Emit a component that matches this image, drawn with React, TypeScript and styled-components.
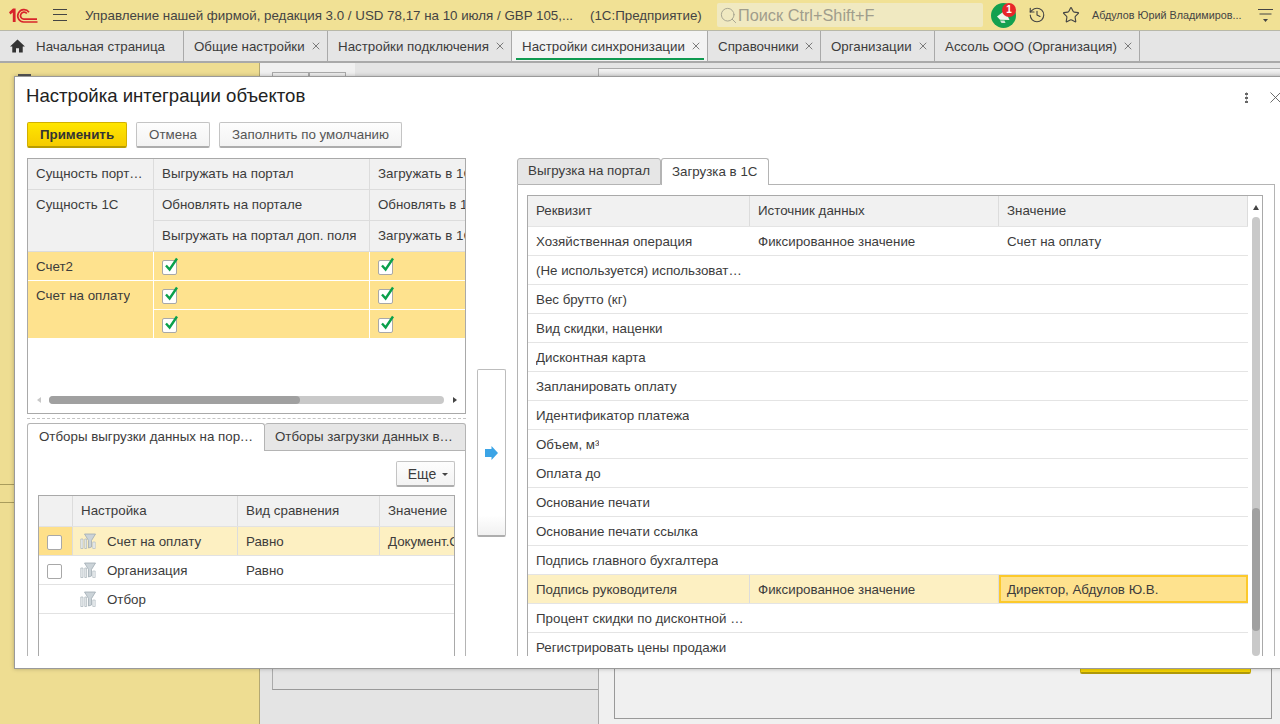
import React from 'react';
import styled, { createGlobalStyle } from 'styled-components';
import { History, Search, Star, X } from 'lucide-react';

const GlobalStyle = createGlobalStyle`
  html, body {
    margin: 0;
    padding: 0;
    overflow: hidden;
    background: #e4e4e4;
    font-family: "Liberation Sans", Arial, sans-serif;
    font-size: 13.33px;
    color: #3c3c3c;
  }
  * {
    box-sizing: border-box;
  }
`;

const Page = styled.div`
  position: relative;
  width: 1280px;
  height: 724px;
  overflow: hidden;
  display: flex;
  flex-direction: column;
`;

/* ---------- top bar ---------- */

const TopBar = styled.header`
  height: 31px;
  flex: none;
  display: flex;
  align-items: center;
  background: #f1e195;
  border-bottom: 1px solid #b8b8a8;
  padding-left: 8px;
`;

const Burger = styled.div`
  width: 14px;
  height: 12px;
  margin-left: 15px;
  border-top: 1px solid #444;
  border-bottom: 1px solid #444;
  position: relative;

  &::after {
    content: '';
    position: absolute;
    left: 0;
    right: 0;
    top: 4px;
    height: 1px;
    background: #444;
  }
`;

const AppTitle = styled.div`
  margin-left: 18px;
  width: 505px;
  white-space: nowrap;
  color: #444;
`;

const AppKind = styled.div`
  width: 127px;
  white-space: nowrap;
  color: #444;
`;

const SearchBox = styled.div`
  width: 266px;
  height: 24px;
  display: flex;
  align-items: center;
  padding-left: 2px;
  background: #f0e9c1;
  border-radius: 2px;
  font-size: 16.3px;
  color: #a09d8c;
`;

const NotifyWrap = styled.div`
  position: relative;
  width: 25px;
  height: 25px;
  margin-left: 8px;
`;

const NotifyBadge = styled.div`
  position: absolute;
  top: 0;
  right: 0;
  width: 14px;
  height: 14px;
  border-radius: 50%;
  background: #e8262a;
  color: #fff;
  font-size: 10px;
  font-weight: 700;
  line-height: 14px;
  text-align: center;
`;

const BarIcon = styled.div<{ $left: number }>`
  display: flex;
  margin-left: ${(p) => p.$left}px;
  color: #444;
`;

const UserName = styled.div`
  margin-left: 12px;
  width: 166px;
  font-size: 10.8px;
  white-space: nowrap;
  color: #444;
`;

/* ---------- open tabs ---------- */

const TabsBar = styled.nav`
  height: 32px;
  flex: none;
  display: flex;
  background: #e5e5e5;
  border-bottom: 2px solid #a9a9a9;
`;

const PageTab = styled.div<{ $width: number; $active?: boolean }>`
  position: relative;
  width: ${(p) => p.$width}px;
  display: flex;
  align-items: center;
  padding-left: 10px;
  white-space: nowrap;
  border-right: 1px solid #a9a9a9;
  background: ${(p) => (p.$active ? '#f3f3f3' : 'transparent')};
  color: #3c3c3c;

  &::after {
    content: '';
    display: ${(p) => (p.$active ? 'block' : 'none')};
    position: absolute;
    left: 4px;
    right: 3px;
    bottom: 1px;
    height: 2px;
    background: #0f9a50;
  }
`;

const HomeTab = styled(PageTab)`
  gap: 11px;
`;

const TabClose = styled.span`
  display: flex;
  margin-left: auto;
  margin-right: 5px;
  color: #555;
`;

/* ---------- page behind the dialog ---------- */

const Workspace = styled.div`
  flex: 1;
  display: flex;
  min-height: 0;
`;

const Sidebar = styled.aside`
  width: 260px;
  flex: none;
  background: #eedd92;
  border-right: 1px solid #b3a873;
  padding-top: 11px;
`;

const SidebarMark = styled.div`
  width: 13px;
  height: 6px;
  margin-left: 18px;
  background: #555;
`;

const SidebarItem = styled.div<{ $top: number }>`
  height: 1px;
  margin-top: ${(p) => p.$top}px;
  background: #a99c5c;
`;

const MainArea = styled.main`
  flex: 1;
  display: flex;
  background: #e4e4e4;
`;

const FormColumn = styled.div`
  width: 338px;
  flex: none;
  display: flex;
  flex-direction: column;
  align-items: flex-start;
`;

const FormToolbar = styled.div`
  width: 95px;
  height: 14px;
  background: #f0f0f0;
  padding: 9px 0 0 12px;
  flex: none;
  display: flex;
`;

const FormToolbarBtn = styled.div`
  width: 37px;
  height: 5px;
  background: #eee;
  border: 1px solid #aaa;
  border-bottom: none;
`;

const FormBox = styled.div`
  width: 326px;
  margin-left: 12px;
  height: 613px;
  border: 1px solid #999;
  border-left: 1px solid #aaa;
  border-right: none;
`;

const WindowBack = styled.div`
  flex: 1;
  margin-top: 5px;
  background: #f0f0f0;
  border-left: 1px solid #aaa;
  border-top: 1px solid #aaa;
  display: flex;
  flex-direction: column;
`;

const WindowHead = styled.div`
  height: 9px;
  flex: none;
  background: linear-gradient(#f4f4f4, #dcdcdc);
`;

const WindowBody = styled.div`
  flex: 1;
  padding: 0 8px 5px 15px;
  display: flex;
`;

const WindowInner = styled.div`
  flex: 1;
  border: 1px solid #999;
  display: flex;
  flex-direction: column;
  justify-content: flex-end;
  align-items: flex-end;
  padding: 0 20px 44px 0;
`;

const WindowButton = styled.div`
  width: 171px;
  height: 26px;
  background: #f6d400;
  border: 1px solid #c9ad00;
  border-bottom: 2px solid #b19a0a;
  border-radius: 2px;
`;

/* ---------- dialog ---------- */

const Dialog = styled.section`
  position: absolute;
  left: 14px;
  top: 76px;
  width: 1290px;
  height: 593px;
  background: #fff;
  border: 1px solid #9a9a9a;
  box-shadow: 0 0 4px rgba(0, 0, 0, 0.25);
  display: flex;
  flex-direction: column;
  padding: 0 24px 12px 12px;
`;

const DialogHead = styled.div`
  height: 45px;
  flex: none;
  display: flex;
  align-items: center;
  padding-bottom: 8px;
  position: relative;
`;

const DialogTitle = styled.h1`
  margin: 0 0 0 -1px;
  font-size: 18.6px;
  font-weight: 400;
  color: #222;
`;

const HeadDots = styled.div`
  position: absolute;
  left: 1218px;
  top: 15px;
  width: 3px;
  height: 11px;
  background: radial-gradient(circle at center, #666 1.4px, transparent 1.6px) 0 0 / 3px 4px repeat-y;
`;

const HeadClose = styled.div`
  position: absolute;
  left: 1239px;
  top: 11px;
  display: flex;
  color: #555;
`;

const CommandBar = styled.div`
  height: 26px;
  flex: none;
  display: flex;
  gap: 9px;
  margin-bottom: 10px;
`;

const Button = styled.button<{ $primary?: boolean; $width: number }>`
  width: ${(p) => p.$width}px;
  height: 26px;
  padding: 0;
  font: ${(p) => (p.$primary ? '700' : '400')} 13.33px "Liberation Sans", Arial, sans-serif;
  color: ${(p) => (p.$primary ? '#333' : '#555')};
  background: ${(p) => (p.$primary ? 'linear-gradient(#ffe600, #f5cb00)' : 'linear-gradient(#fdfdfd, #f3f3f3)')};
  border: 1px solid ${(p) => (p.$primary ? '#d2b000' : '#c4c4c4')};
  border-bottom: 2px solid ${(p) => (p.$primary ? '#b89c00' : '#adadad')};
  border-radius: 2px;
`;

const Columns = styled.div`
  flex: 1;
  min-height: 0;
  display: flex;
`;

const LeftColumn = styled.div`
  width: 439px;
  flex: none;
  display: flex;
  flex-direction: column;
`;

const MoveColumn = styled.div`
  width: 51px;
  flex: none;
  display: flex;
  justify-content: center;
  padding-top: 211px;
`;

const MoveButton = styled.div`
  width: 29px;
  height: 168px;
  display: flex;
  align-items: center;
  justify-content: center;
  background: linear-gradient(#fff 88%, #f1f1f1);
  border: 1px solid #bdbdbd;
  border-bottom: 2px solid #aeaeae;
  border-radius: 2px;
`;

const RightColumn = styled.div`
  width: 758px;
  flex: none;
  display: flex;
  flex-direction: column;
`;

/* ---------- entity table ---------- */

const EntityBox = styled.div`
  height: 256px;
  flex: none;
  border: 1px solid #a9a9a9;
  display: flex;
  flex-direction: column;
`;

const EntityGrid = styled.div`
  flex: 1;
  display: grid;
  grid-template-columns: 126px 216px 95px;
  grid-template-rows: repeat(3, 31px) repeat(3, 29px);
  align-content: start;
`;

const EntityCell = styled.div<{ $head?: boolean; $span?: number; $top?: boolean; $clip?: boolean }>`
  grid-row: span ${(p) => p.$span || 1};
  display: flex;
  align-items: ${(p) => (p.$top ? 'flex-start' : 'center')};
  padding: ${(p) => (p.$top ? '7px' : '0')} ${(p) => (p.$clip ? '0' : '8px')} ${(p) => (p.$head && !p.$top ? '2px' : '0')} 8px;
  min-width: 0;
  overflow: hidden;
  white-space: nowrap;
  background: ${(p) => (p.$head ? '#f1f1f1' : '#fee28e')};
  border-right: ${(p) => (p.$clip ? 'none' : `1px solid ${p.$head ? '#dcdcdc' : '#fff'}`)};
  border-bottom: 1px solid ${(p) => (p.$head ? '#dcdcdc' : '#fff')};
`;

const CellText = styled.span`
  overflow: hidden;
  text-overflow: ellipsis;
`;

const ClippedText = styled.span`
  overflow: hidden;
  text-overflow: clip;
`;

const CheckBox = styled.span`
  position: relative;
  display: block;
  width: 15px;
  height: 15px;
  flex: none;
  margin-top: 3px;
  background: #fff;
  border: 1px solid #a8a8a8;
  border-radius: 2px;

  svg {
    position: absolute;
    left: -1px;
    top: -5px;
  }
`;

const HScroll = styled.div`
  height: 26px;
  flex: none;
  display: flex;
  align-items: center;
  padding: 0 8px 1px 9px;
  margin-top: -1px;
`;

const ArrowGlyph = styled.span<{ $dir: 'left' | 'right' | 'up'; $dim?: boolean }>`
  display: block;
  flex: none;
  width: 0;
  height: 0;
  border-style: solid;
  border-color: transparent;
  ${(p) =>
    p.$dir === 'up'
      ? `border-width: 0 3.5px 5px; border-bottom-color: #444;`
      : p.$dir === 'left'
        ? `border-width: 3px 4px 3px 0; border-right-color: ${p.$dim ? '#c8c8c8' : '#444'};`
        : `border-width: 3px 0 3px 4px; border-left-color: #444;`}
`;

const HTrack = styled.div`
  flex: 1;
  height: 8px;
  margin: 0 9px 0 8px;
  border-radius: 4px;
  background: #c9c9c9;
`;

const HThumb = styled.div`
  height: 8px;
  border-radius: 4px;
  background: #a0a0a0;
`;

const Splitter = styled.div`
  height: 9px;
  flex: none;
  padding-top: 4px;

  &::before {
    content: '';
    display: block;
    border-top: 1px dashed #c4c4c4;
  }
`;

/* ---------- tabs inside the dialog ---------- */

const TabRow = styled.div<{ $height: number }>`
  height: ${(p) => p.$height}px;
  flex: none;
  display: flex;
`;

const FormTab = styled.div<{ $width: number | string; $active?: boolean; $fill?: boolean }>`
  width: ${(p) => (typeof p.$width === 'number' ? `${p.$width}px` : p.$width)};
  flex: ${(p) => (p.$fill ? '1 1 0' : 'none')};
  min-width: 0;
  display: flex;
  align-items: center;
  padding: 0 10px 2px;
  white-space: nowrap;
  background: ${(p) => (p.$active ? '#fff' : '#e6e6e6')};
  border: 1px solid #b4b4b4;
  border-bottom: ${(p) => (p.$active ? 'none' : '1px solid #b4b4b4')};
  border-left-width: ${(p) => (p.$active ? '1px' : '0')};
  border-radius: 3px 3px 0 0;
  color: #3c3c3c;
`;

const FirstTab = styled(FormTab)`
  border-left-width: 1px;
`;

const FilterFirstTab = styled(FirstTab)`
  padding-left: 11px;
`;

const TabRest = styled.div`
  flex: 1;
  border-bottom: 1px solid #b4b4b4;
`;

const TabPanel = styled.div`
  flex: 1;
  min-height: 0;
  border-left: 1px solid #b4b4b4;
  border-right: 1px solid #b4b4b4;
  display: flex;
  flex-direction: column;
`;

const FilterPanel = styled(TabPanel)`
  padding: 10px 10px 0;
`;

const FilterActions = styled.div`
  height: 26px;
  flex: none;
  display: flex;
  justify-content: flex-end;
  margin-bottom: 8px;
`;

const MoreButton = styled.button`
  width: 59px;
  height: 26px;
  padding: 0 0 0 5px;
  display: flex;
  align-items: center;
  justify-content: center;
  gap: 6px;
  font: 14px "Liberation Sans", Arial, sans-serif;
  color: #3c3c3c;
  background: linear-gradient(#fdfdfd, #f3f3f3);
  border: 1px solid #c4c4c4;
  border-bottom: 2px solid #adadad;
  border-radius: 2px;

  &::after {
    content: '';
    margin-top: 2px;
    border-style: solid;
    border-width: 3px 3px 0;
    border-color: #444 transparent transparent;
  }
`;

/* ---------- filter table ---------- */

const FilterTable = styled.div`
  flex: 1;
  min-height: 0;
  overflow: hidden;
  border: 1px solid #a9a9a9;
  border-bottom: none;
`;

const FilterRow = styled.div<{ $head?: boolean }>`
  display: grid;
  grid-template-columns: 34px 165px 142px 1fr;
  height: ${(p) => (p.$head ? 31 : 29)}px;
  background: ${(p) => (p.$head ? '#f1f1f1' : '#fff')};
  border-bottom: 1px solid #e2e2e2;
`;

const FilterCell = styled.div<{ $tint?: 'strong' | 'soft'; $line?: boolean; $head?: boolean }>`
  display: flex;
  align-items: center;
  gap: 11px;
  min-width: 0;
  overflow: hidden;
  white-space: nowrap;
  padding: 0 0 ${(p) => (p.$head ? '2px' : '0')} 8px;
  background: ${(p) => (p.$tint === 'strong' ? '#fee08a' : p.$tint === 'soft' ? '#fdf0c2' : 'transparent')};
  border-right: ${(p) => (p.$line ? '1px solid #dcdcdc' : 'none')};
`;

const FilterIconWrap = styled.span`
  display: flex;
  flex: none;
  margin-left: -1px;
`;

/* ---------- requisites table ---------- */

const RightPanel = styled(TabPanel)`
  padding: 10px 11px 0 9px;
`;

const AttrTable = styled.div`
  flex: 1;
  min-height: 0;
  display: flex;
  overflow: hidden;
  border: 1px solid #a9a9a9;
  border-bottom: none;
`;

const AttrRows = styled.div`
  width: 720px;
  flex: none;
`;

const AttrRow = styled.div<{ $head?: boolean; $hot?: boolean }>`
  display: grid;
  grid-template-columns: 222px 249px 1fr;
  height: ${(p) => (p.$head ? 31 : 29)}px;
  background: ${(p) => (p.$head ? '#f1f1f1' : p.$hot ? '#fdf0c2' : '#fff')};
  border-bottom: 1px solid #e4e4e4;
`;

const AttrCell = styled.div<{ $line?: boolean; $focus?: boolean; $head?: boolean }>`
  display: flex;
  align-items: center;
  min-width: 0;
  white-space: nowrap;
  padding: 0 5px ${(p) => (p.$head ? '2px' : '0')} 8px;
  border-right: ${(p) => (p.$line ? '1px solid #dcdcdc' : 'none')};
  background: ${(p) => (p.$focus ? '#fee28e' : 'transparent')};
  outline: ${(p) => (p.$focus ? '2px solid #fcc92b' : 'none')};
  outline-offset: -2px;
`;

const AttrText = styled.span`
  overflow: hidden;
  text-overflow: ellipsis;
`;

const VScroll = styled.div`
  flex: 1;
  display: flex;
  flex-direction: column;
  align-items: center;
  padding: 9px 0 0 1px;
`;

const VTrack = styled.div`
  width: 8px;
  flex: 1;
  margin-top: 7px;
  border-radius: 4px;
  background: #c9c9c9;
`;

const VThumb = styled.div`
  width: 8px;
  height: 123px;
  margin-top: 291px;
  border-radius: 4px;
  background: #a0a0a0;
`;

/* ---------- drawings ---------- */

const Logo = () => (
  <svg width="30" height="17" viewBox="0 0 30 17" fill="none">
    <path d="M1 5.2 5 1.5h2.6V15H4.8V5.4L2.4 7.4Z" fill="#d8242a" />
    <path d="M21 5.2A6.2 6.2 0 1 0 15.6 15H29.5" stroke="#d8242a" strokeWidth="1.7" />
    <path d="M18.8 6.6A3.5 3.5 0 1 0 15.8 12.2H29" stroke="#d8242a" strokeWidth="1.7" />
  </svg>
);

const Bell = () => (
  <svg width="25" height="25" viewBox="0 0 25 25">
    <circle cx="12.5" cy="12.5" r="12.5" fill="#13a04f" />
    <path d="M6 13.5 14 7.5 18.5 17 9 16.8Z" fill="#eef5ea" />
    <path d="M9 17.5 13.5 17.5 14.5 20 10.5 20Z" fill="#cfe6d3" />
  </svg>
);

const MenuLines = () => (
  <svg width="15" height="15" viewBox="0 0 15 15" fill="none" stroke="#444">
    <path d="M0 1.5H15M1.5 6H13.5" />
    <path d="M5 11 7.5 14 10 11Z" fill="#444" stroke="none" />
  </svg>
);

const HomeIcon = () => (
  <svg width="15" height="14" viewBox="0 0 16 15" fill="#333">
    <path d="M8 .5 16 8h-2.4v6.5H9.6V10H6.4v4.5H2.4V8H0Z" />
  </svg>
);

const Tick = () => (
  <svg width="18" height="18" viewBox="0 0 18 18" fill="none">
    <path d="M4 9.5 7.6 13.5 15 2.5" stroke="#0aa04c" strokeWidth="2.4" />
  </svg>
);

const MoveArrow = () => (
  <svg width="13" height="14" viewBox="0 0 13 14">
    <path d="M0 3H6.5V0L13 7 6.5 14V11H0Z" fill="#3ba4e6" />
  </svg>
);

const FilterIcon = () => (
  <svg width="16" height="16" viewBox="0 0 16 16" fill="none">
    <path d="M4.5 1H15.5L11.5 7.5V14L8.5 15V7.5Z" fill="#cbd3d8" stroke="#9fabb2" strokeWidth=".8" />
    <path d="M.8 6H3V15.5H.8ZM4.8 6H6.6V15.5H4.8Z" fill="#edf0f2" stroke="#a7b2b9" strokeWidth=".7" />
    <path d="M12.8 9H15.2V15.5H12.8Z" fill="#edf0f2" stroke="#b3bdc3" strokeWidth=".7" />
  </svg>
);

/* ---------- data ---------- */

const pageTabs = [
  { label: 'Общие настройки', width: 144 },
  { label: 'Настройки подключения', width: 184 },
  { label: 'Настройки синхронизации', width: 196, active: true },
  { label: 'Справочники', width: 113 },
  { label: 'Организации', width: 114 },
  { label: 'Ассоль ООО (Организация)', width: 205 },
];

const attrRows: { name: string; source?: string; value?: string; hot?: boolean }[] = [
  { name: 'Хозяйственная операция', source: 'Фиксированное значение', value: 'Счет на оплату' },
  { name: '(Не используется) использовать упаковки' },
  { name: 'Вес брутто (кг)' },
  { name: 'Вид скидки, наценки' },
  { name: 'Дисконтная карта' },
  { name: 'Запланировать оплату' },
  { name: 'Идентификатор платежа' },
  { name: 'Объем, м³' },
  { name: 'Оплата до' },
  { name: 'Основание печати' },
  { name: 'Основание печати ссылка' },
  { name: 'Подпись главного бухгалтера' },
  { name: 'Подпись руководителя', source: 'Фиксированное значение', value: 'Директор, Абдулов Ю.В.', hot: true },
  { name: 'Процент скидки по дисконтной карте' },
  { name: 'Регистрировать цены продажи' },
];

const filterRows = [
  { name: 'Счет на оплату', kind: 'Равно', value: 'Документ.Счет', check: true, hot: true },
  { name: 'Организация', kind: 'Равно', value: '', check: true },
  { name: 'Отбор', kind: '', value: '', check: false },
];

const App: React.FC = () => (
  <Page>
    <GlobalStyle />

    <TopBar>
      <Logo />
      <Burger />
      <AppTitle>Управление нашей фирмой, редакция 3.0 / USD 78,17 на 10 июля / GBP 105,...</AppTitle>
      <AppKind>(1С:Предприятие)</AppKind>
      <SearchBox>
        <Search size={19} strokeWidth={1.2} color="#a5a38f" />
        Поиск Ctrl+Shift+F
      </SearchBox>
      <NotifyWrap>
        <Bell />
        <NotifyBadge>1</NotifyBadge>
      </NotifyWrap>
      <BarIcon $left={12}>
        <History size={18} strokeWidth={1.5} />
      </BarIcon>
      <BarIcon $left={16}>
        <Star size={18} strokeWidth={1.5} />
      </BarIcon>
      <UserName>Абдулов Юрий Владимиров...</UserName>
      <MenuLines />
    </TopBar>

    <TabsBar>
      <HomeTab $width={184}>
        <HomeIcon />
        Начальная страница
      </HomeTab>
      {pageTabs.map((tab) => (
        <PageTab key={tab.label} $width={tab.width} $active={tab.active}>
          {tab.label}
          <TabClose>
            <X size={12} strokeWidth={1.5} />
          </TabClose>
        </PageTab>
      ))}
    </TabsBar>

    <Workspace>
      <Sidebar>
        <SidebarMark />
        <SidebarItem $top={404} />
        <SidebarItem $top={17} />
      </Sidebar>
      <MainArea>
        <FormColumn>
          <FormToolbar>
            <FormToolbarBtn />
            <FormToolbarBtn />
          </FormToolbar>
          <FormBox />
        </FormColumn>
        <WindowBack>
          <WindowHead />
          <WindowBody>
            <WindowInner>
              <WindowButton />
            </WindowInner>
          </WindowBody>
        </WindowBack>
      </MainArea>
    </Workspace>

    <Dialog>
      <DialogHead>
        <DialogTitle>Настройка интеграции объектов</DialogTitle>
        <HeadDots />
        <HeadClose>
          <X size={19} strokeWidth={1.1} />
        </HeadClose>
      </DialogHead>

      <CommandBar>
        <Button $primary $width={100}>Применить</Button>
        <Button $width={74}>Отмена</Button>
        <Button $width={183}>Заполнить по умолчанию</Button>
      </CommandBar>

      <Columns>
        <LeftColumn>
          <EntityBox>
            <EntityGrid>
              <EntityCell $head><CellText>Сущность портала</CellText></EntityCell>
              <EntityCell $head><CellText>Выгружать на портал</CellText></EntityCell>
              <EntityCell $head $clip><ClippedText>Загружать в 1С</ClippedText></EntityCell>

              <EntityCell $head $span={2} $top><CellText>Сущность 1С</CellText></EntityCell>
              <EntityCell $head><CellText>Обновлять на портале</CellText></EntityCell>
              <EntityCell $head $clip><ClippedText>Обновлять в 1С</ClippedText></EntityCell>
              <EntityCell $head><CellText>Выгружать на портал доп. поля</CellText></EntityCell>
              <EntityCell $head $clip><ClippedText>Загружать в 1С доп. поля</ClippedText></EntityCell>

              <EntityCell><CellText>Счет2</CellText></EntityCell>
              <EntityCell><CheckBox><Tick /></CheckBox></EntityCell>
              <EntityCell $clip><CheckBox><Tick /></CheckBox></EntityCell>

              <EntityCell $span={2} $top><CellText>Счет на оплату</CellText></EntityCell>
              <EntityCell><CheckBox><Tick /></CheckBox></EntityCell>
              <EntityCell $clip><CheckBox><Tick /></CheckBox></EntityCell>
              <EntityCell><CheckBox><Tick /></CheckBox></EntityCell>
              <EntityCell $clip><CheckBox><Tick /></CheckBox></EntityCell>
            </EntityGrid>
            <HScroll>
              <ArrowGlyph $dir="left" $dim />
              <HTrack>
                <HThumb style={{ width: `${(251 / 395) * 100}%` }} />
              </HTrack>
              <ArrowGlyph $dir="right" />
            </HScroll>
          </EntityBox>

          <Splitter />

          <TabRow $height={28}>
            <FilterFirstTab $width={238} $active>
              <CellText>Отборы выгрузки данных на портал</CellText>
            </FilterFirstTab>
            <FormTab $width="auto" $fill>
              <CellText>Отборы загрузки данных в 1С из портала</CellText>
            </FormTab>
          </TabRow>
          <FilterPanel>
            <FilterActions>
              <MoreButton>Еще</MoreButton>
            </FilterActions>
            <FilterTable>
              <FilterRow $head>
                <FilterCell $line />
                <FilterCell $line $head>Настройка</FilterCell>
                <FilterCell $line $head>Вид сравнения</FilterCell>
                <FilterCell $head>Значение</FilterCell>
              </FilterRow>
              {filterRows.map((row) => (
                <FilterRow key={row.name}>
                  <FilterCell $tint={row.hot ? 'strong' : undefined} $line={row.hot}>
                    {row.check && <CheckBox />}
                  </FilterCell>
                  <FilterCell $tint={row.hot ? 'soft' : undefined} $line={row.hot}>
                    <FilterIconWrap>
                      <FilterIcon />
                    </FilterIconWrap>
                    {row.name}
                  </FilterCell>
                  <FilterCell $tint={row.hot ? 'soft' : undefined} $line={row.hot}>
                    {row.kind}
                  </FilterCell>
                  <FilterCell $tint={row.hot ? 'soft' : undefined}>{row.value}</FilterCell>
                </FilterRow>
              ))}
            </FilterTable>
          </FilterPanel>
        </LeftColumn>

        <MoveColumn>
          <MoveButton>
            <MoveArrow />
          </MoveButton>
        </MoveColumn>

        <RightColumn>
          <TabRow $height={27}>
            <FirstTab $width={144}>Выгрузка на портал</FirstTab>
            <FormTab $width={108} $active>Загрузка в 1С</FormTab>
            <TabRest />
          </TabRow>
          <RightPanel>
            <AttrTable>
              <AttrRows>
                <AttrRow $head>
                  <AttrCell $line $head>Реквизит</AttrCell>
                  <AttrCell $line $head>Источник данных</AttrCell>
                  <AttrCell $line $head>Значение</AttrCell>
                </AttrRow>
                {attrRows.map((row) => (
                  <AttrRow key={row.name} $hot={row.hot}>
                    <AttrCell $line={row.hot}>
                      <AttrText>{row.name}</AttrText>
                    </AttrCell>
                    <AttrCell $line={row.hot}>{row.source}</AttrCell>
                    <AttrCell $focus={row.hot}>{row.value}</AttrCell>
                  </AttrRow>
                ))}
              </AttrRows>
              <VScroll>
                <ArrowGlyph $dir="up" />
                <VTrack>
                  <VThumb />
                </VTrack>
              </VScroll>
            </AttrTable>
          </RightPanel>
        </RightColumn>
      </Columns>
    </Dialog>
  </Page>
);

export default App;
